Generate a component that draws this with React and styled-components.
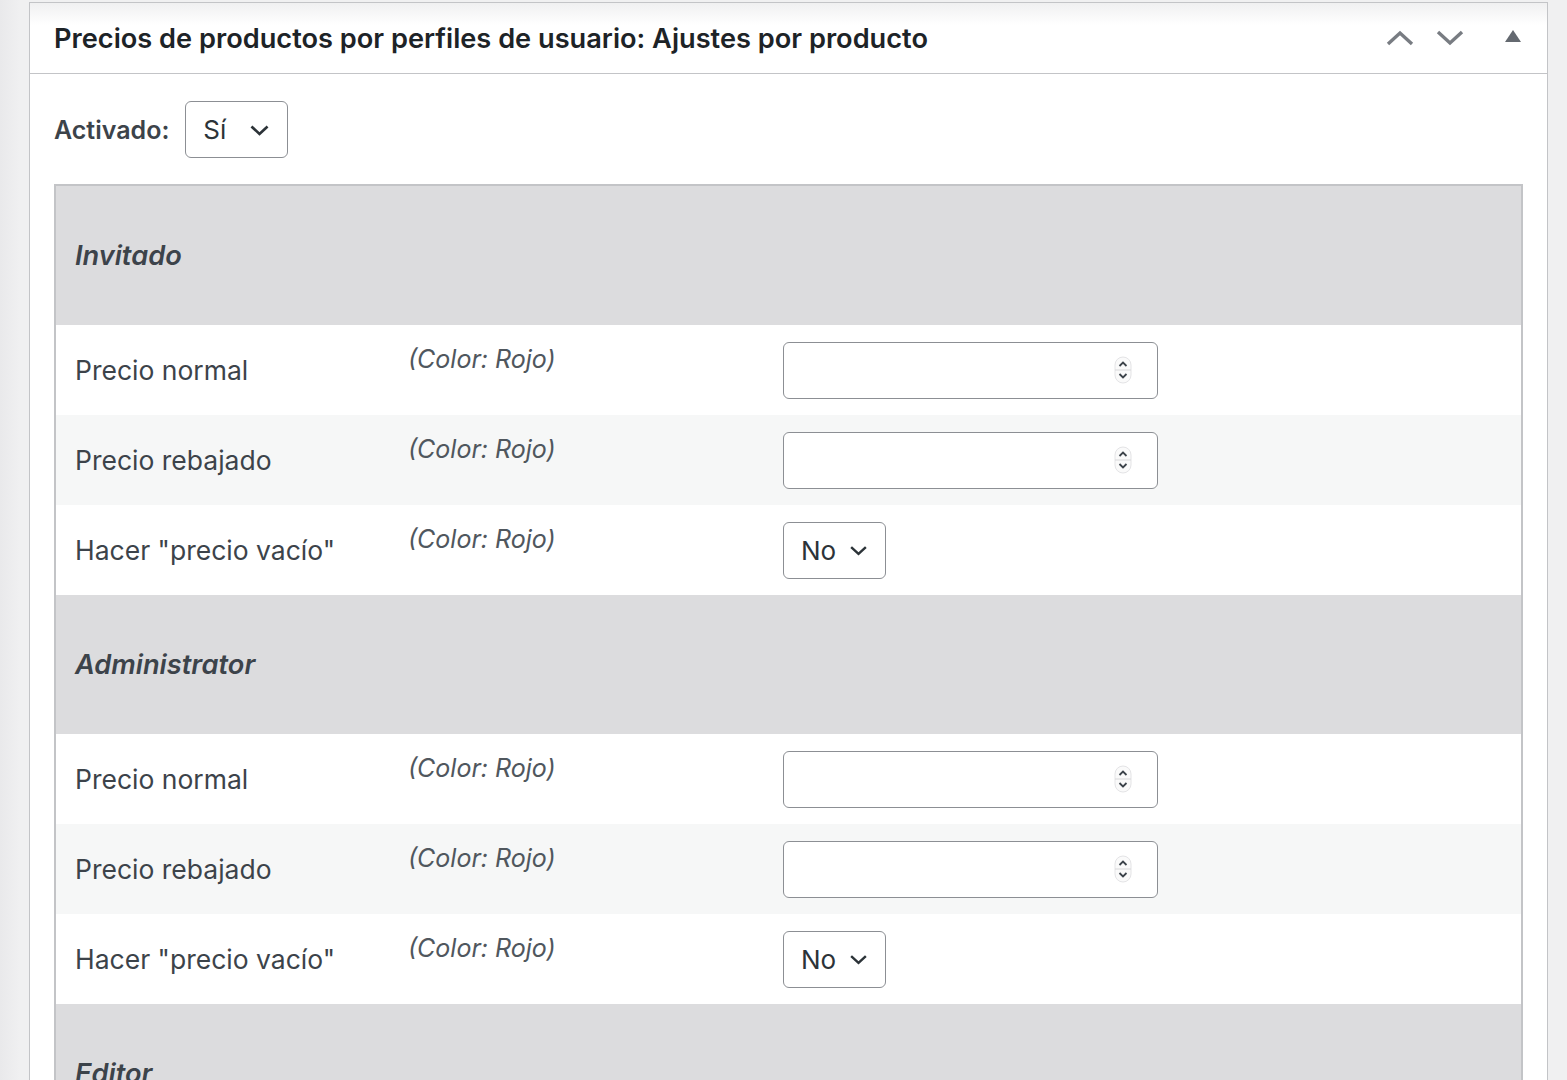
import React from 'react'
import styled, { createGlobalStyle } from 'styled-components'

const GlobalStyle = createGlobalStyle`
  html, body {
    margin: 0;
    padding: 0;
    background: #f0f0f1;
    font-family: Inter, "Noto Sans", "Liberation Sans", sans-serif;
    color: #3c434a;
  }
`

const groups = [
  { name: 'Invitado' },
  { name: 'Administrator' },
  { name: 'Editor' },
]

const fields = [
  { label: 'Precio normal', type: 'number' },
  { label: 'Precio rebajado', type: 'number' },
  { label: 'Hacer "precio vacío"', type: 'select' },
]

function Chevron({ up }) {
  return (
    <svg width="30" height="18" viewBox="0 0 30 18">
      <path
        d={up ? 'M3 15 L15 4 L27 15' : 'M3 3 L15 14 L27 3'}
        fill="none"
        stroke="#787c82"
        strokeWidth="3.4"
      />
    </svg>
  )
}

function SmallChevron({ size = 22 }) {
  return (
    <svg width={size} height={size * 0.6} viewBox="0 0 20 12">
      <path d="M3 3 L10 9.5 L17 3" fill="none" stroke="#2c3338" strokeWidth="2.3" />
    </svg>
  )
}

function Spinner() {
  return (
    <svg width="18" height="28" viewBox="0 0 18 28">
      <rect x="1" y="1" width="16" height="26" rx="8" fill="#fafafa" stroke="#e4e4e6" />
      <line x1="1" y1="14" x2="17" y2="14" stroke="#d8d8da" />
      <path d="M5.5 10 L9 6.5 L12.5 10" fill="none" stroke="#3c434a" strokeWidth="1.8" />
      <path d="M5.5 18 L9 21.5 L12.5 18" fill="none" stroke="#3c434a" strokeWidth="1.8" />
    </svg>
  )
}

function App() {
  return (
    <>
      <GlobalStyle />
      <Page>
        <Postbox>
          <Header>
            <Title>Precios de productos por perfiles de usuario: Ajustes por producto</Title>
            <HeaderActions>
              <IconButton><Chevron up /></IconButton>
              <IconButton><Chevron /></IconButton>
              <Toggle />
            </HeaderActions>
          </Header>
          <Inside>
            <EnabledRow>
              <EnabledLabel>Activado:</EnabledLabel>
              <Select width={103} gap={22}>
                <span>Sí</span>
                <SmallChevron size={23} />
              </Select>
            </EnabledRow>
            <Table>
              {groups.map((g) => (
                <React.Fragment key={g.name}>
                  <GroupRow>{g.name}</GroupRow>
                  {fields.map((f, i) => (
                    <Row key={f.label} alt={i === 1}>
                      <Label>{f.label}</Label>
                      <ColorNote>(Color: Rojo)</ColorNote>
                      <Field>
                        {f.type === 'number' ? (
                          <NumberInput>
                            <Spinner />
                          </NumberInput>
                        ) : (
                          <Select width={103} gap={12}>
                            <span>No</span>
                            <SmallChevron size={21} />
                          </Select>
                        )}
                      </Field>
                    </Row>
                  ))}
                </React.Fragment>
              ))}
            </Table>
          </Inside>
        </Postbox>
      </Page>
    </>
  )
}

export default App

const Page = styled.div`
  padding: 2px 19px 0 29px;
  height: 1078px;
  overflow: hidden;
  background: linear-gradient(90deg, #e9e9eb 0, #f0f0f1 20px);
`

const Postbox = styled.div`
  background: #fff;
  border: 1px solid #c3c4c7;
  border-bottom: none;
  min-height: 1200px;
`

const Header = styled.div`
  display: flex;
  align-items: center;
  justify-content: space-between;
  height: 70px;
  padding: 0 22px 0 24px;
  border-bottom: 1.5px solid #c3c4c7;
  background: linear-gradient(180deg, #f0f0f1 0, #fff 22px);
`

const Title = styled.h2`
  margin: 0;
  font-size: 27.2px;
  font-weight: 600;
  color: #1d2327;
`

const HeaderActions = styled.div`
  display: flex;
  align-items: center;
`

const IconButton = styled.span`
  display: flex;
  align-items: center;
  justify-content: center;
  width: 50px;
  height: 40px;
`

const Toggle = styled.span`
  width: 0;
  height: 0;
  margin-left: 30px;
  margin-right: 4px;
  margin-bottom: 4px;
  border-left: 8px solid transparent;
  border-right: 8px solid transparent;
  border-bottom: 12px solid #646970;
`

const Inside = styled.div`
  padding: 27px 24px 0 24px;
`

const EnabledRow = styled.div`
  display: flex;
  align-items: center;
  gap: 16px;
  margin-bottom: 26px;
`

const EnabledLabel = styled.label`
  font-size: 25px;
  font-weight: 600;
  color: #3c434a;
`

const Select = styled.div`
  display: flex;
  align-items: center;
  gap: ${(p) => p.gap}px;
  box-sizing: border-box;
  width: ${(p) => p.width}px;
  height: 57px;
  padding: 0 14px 0 17px;
  border: 1.5px solid #8c8f94;
  border-radius: 6px;
  background: #fff;
  font-size: 26px;
  color: #2c3338;

  svg {
    flex-shrink: 0;
  }
`

const Table = styled.div`
  border: 2px solid #c3c4c7;
  border-bottom: none;
`

const GroupRow = styled.div`
  display: flex;
  align-items: center;
  height: 139px;
  padding-left: 19px;
  background: #dcdcde;
  font-size: 27.2px;
  font-weight: 600;
  font-style: italic;
  color: #3c434a;
`

const Row = styled.div`
  display: grid;
  grid-template-columns: 333px 375px 1fr;
  align-items: center;
  height: 90px;
  padding-left: 19px;
  background: ${(p) => (p.alt ? '#f6f7f7' : '#fff')};
`

const Label = styled.div`
  font-size: 26.5px;
  color: #3c434a;
`

const ColorNote = styled.div`
  align-self: start;
  padding-top: 19px;
  font-size: 25px;
  font-style: italic;
  color: #50575e;
`

const Field = styled.div`
  display: flex;
  align-items: center;
`

const NumberInput = styled.div`
  display: flex;
  align-items: center;
  justify-content: flex-end;
  box-sizing: border-box;
  width: 375px;
  height: 57px;
  padding-right: 25px;
  border: 1.5px solid #8c8f94;
  border-radius: 6px;
  background: #fff;
`
